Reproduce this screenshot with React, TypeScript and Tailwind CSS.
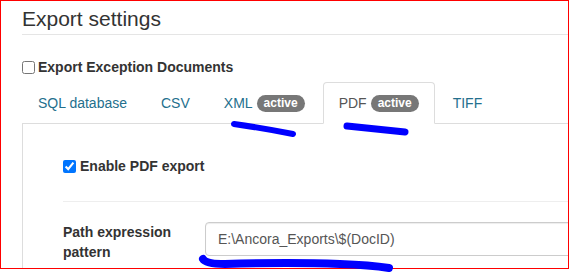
import React from 'react';

type Tab = {
  label: string;
  badge?: string;
  active?: boolean;
};

const tabs: Tab[] = [
  { label: 'SQL database' },
  { label: 'CSV' },
  { label: 'XML', badge: 'active' },
  { label: 'PDF', badge: 'active', active: true },
  { label: 'TIFF' },
];

const Badge = ({ text }: { text: string }) => (
  <span className="ml-[4px] inline-flex h-[17px] items-center rounded-[10px] bg-[#777] px-[7px] text-[12px] font-bold leading-none text-white">
    {text}
  </span>
);

const Scribbles = () => (
  <svg
    className="pointer-events-none absolute inset-0"
    width={570}
    height={272}
    viewBox="0 0 570 272"
    fill="none"
  >
    <path d="M234 124 Q 262 128 293 134" stroke="#0000ff" strokeWidth={6} strokeLinecap="round" />
    <path d="M347 126 Q 376 129 405 132" stroke="#0000ff" strokeWidth={7} strokeLinecap="round" />
    <path
      d="M203 259 Q 206 264 225 264 Q 290 262 340 264 Q 370 265 389 268"
      stroke="#0000ff"
      strokeWidth={8}
      strokeLinecap="round"
    />
  </svg>
);

export default function App() {
  return (
    <div className="relative h-[272px] w-[570px] bg-white font-['Liberation_Sans',Arial,sans-serif] text-[14px] text-[#333]">
      <div className="h-[269px] w-[569px] overflow-hidden border border-[#ff0000] pl-[21px]">
        <h1 className="mt-[6px] border-b border-[#e5e5e5] pb-[3px] text-[21px] leading-[24px] text-[#333]">
          Export settings
        </h1>

        <label className="mt-[22px] flex h-[20px] items-center font-bold leading-[20px]">
          <input type="checkbox" className="m-0 mr-[3px] h-[13px] w-[13px]" />
          Export Exception Documents
        </label>

        <ul className="mt-[5px] flex border-b border-[#ddd]">
          {tabs.map((tab) => (
            <li key={tab.label} className="-mb-px mr-[2px]">
              <span
                className={`flex items-center rounded-t-[4px] border px-[15px] py-[10px] leading-[20px] ${
                  tab.active
                    ? 'border-[#ddd] border-b-transparent bg-white text-[#555]'
                    : 'border-transparent text-[#246f8d]'
                }`}
              >
                {tab.label}
                {tab.badge && <Badge text={tab.badge} />}
              </span>
            </li>
          ))}
        </ul>

        <div className="h-[200px] border-l border-[#ddd] pl-[40px] pt-[32px]">
          <label className="flex h-[20px] items-center font-bold leading-[20px]">
            <input
              type="checkbox"
              defaultChecked
              className="m-0 mr-[4px] h-[13px] w-[13px] accent-[#0075ff]"
            />
            Enable PDF export
          </label>

          <hr className="mt-[25px] border-t border-[#eee]" />

          <div className="mt-[20px] flex">
            <div className="w-[142px] shrink-0 font-bold leading-[20px]">Path expression pattern</div>
            <input
              readOnly
              defaultValue="E:\Ancora_Exports\$(DocID)"
              className="h-[34px] w-[400px] shrink-0 rounded-[4px] border border-[#ccc] px-[12px] text-[14px] text-[#555] shadow-[inset_0_1px_1px_rgba(0,0,0,0.075)] outline-none"
            />
          </div>
        </div>
      </div>
      <Scribbles />
    </div>
  );
}
